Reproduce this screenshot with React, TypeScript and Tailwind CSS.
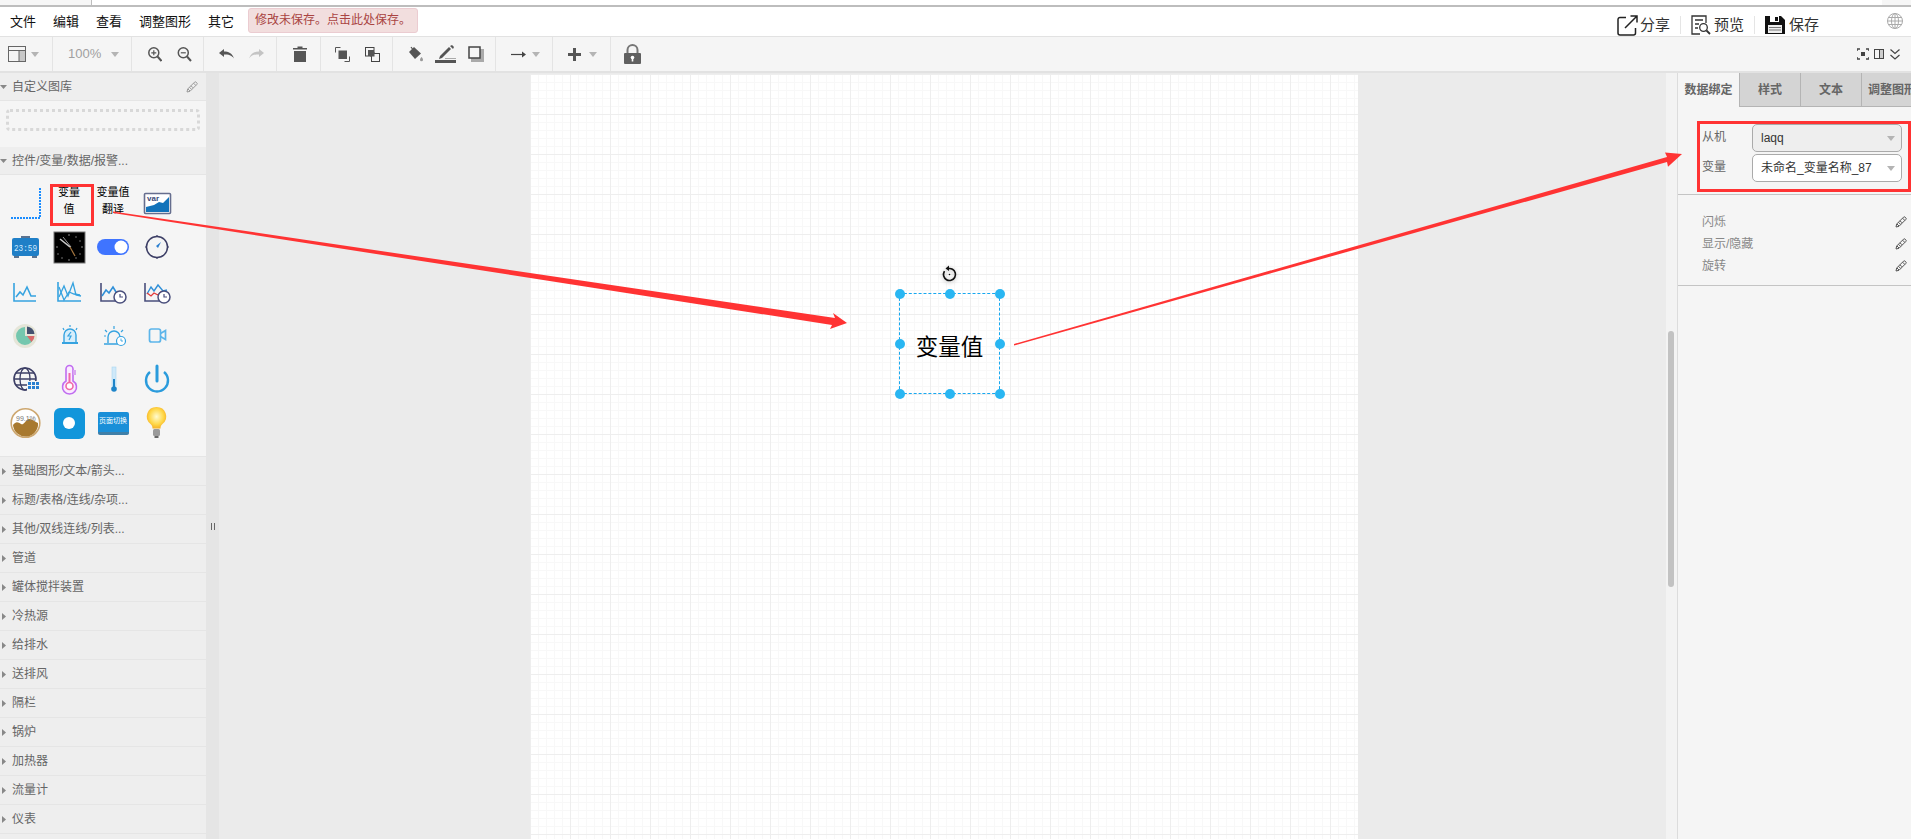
import React from "react";

const Caret = ({ cls = "ml-0" }: { cls?: string }) => (
  <svg className={`${cls} shrink-0`} width="8" height="5" viewBox="0 0 8 5"><path d="M0 0h8L4 5z" fill="#b4b4b4" /></svg>
);

const Pencil = ({ color = "#555" }: { color?: string }) => (
  <svg width="12" height="12" viewBox="0 0 12 12" fill="none" stroke={color} strokeWidth="1">
    <path d="M1 11l.7-3L8.6 1.1a1 1 0 0 1 1.4 0l.9.9a1 1 0 0 1 0 1.4L4 10.3z" />
    <path d="M2 8l2 2M3.5 6.3l2 2M5 4.8l2 2M7.6 2.2l2.2 2.2" />
  </svg>
);

const Sec = ({ w, children }: { w: string; children?: React.ReactNode }) => (
  <div className={`${w} h-full flex items-center shrink-0 border-r border-[#e4e4e4]`}>{children}</div>
);

const Cell = ({ children }: { children: React.ReactNode }) => (
  <svg className="w-[44px] h-[44px]" viewBox="0 0 44 44" fill="none">{children}</svg>
);

const Clock = ({ cx, cy, r = 6 }: { cx: number; cy: number; r?: number }) => (
  <g>
    <circle cx={cx} cy={cy} r={r} fill="#fff" stroke="#4a4f7c" strokeWidth="1.5" />
    <path d={`M${cx} ${cy - 3}V${cy}h3`} stroke="#4a4f7c" strokeWidth="1.2" />
  </g>
);

const icons: React.ReactNode[] = [
  <Cell key="a"><path d="M37 7v30H7" stroke="#1a8cff" strokeWidth="2" strokeDasharray="2 1" /></Cell>,
  <div key="b" className="w-[44px] h-[44px] flex flex-col items-center text-[11px] leading-[17px] pt-[3px] text-black"><span>变量</span><span>值</span></div>,
  <div key="c" className="w-[44px] h-[44px] flex flex-col items-center text-[11px] leading-[17px] pt-[3px] text-black whitespace-nowrap"><span>变量值</span><span>翻译</span></div>,
  <Cell key="d">
    <rect x="9.5" y="12.5" width="26" height="20" rx="1" fill="#fff" stroke="#666e8e" strokeWidth="1.6" />
    <path d="M11 31V26l8-2 5-3 4 1 6-6v15z" fill="#1273ba" />
    <text x="12" y="20" fontSize="8" fontWeight="700" fill="#3b4a78" fontFamily="Liberation Sans">var</text>
  </Cell>,
  <Cell key="e">
    <rect x="18" y="11" width="9" height="3" fill="#5b7390" />
    <rect x="9" y="13" width="27" height="18" rx="2" fill="#1f7fc7" />
    <rect x="11" y="31" width="5" height="2" fill="#5b7390" /><rect x="29" y="31" width="5" height="2" fill="#5b7390" />
    <text x="11" y="25.500" fontSize="9" textLength="23" lengthAdjust="spacingAndGlyphs" fill="#cfeaff" fontFamily="Liberation Mono">23:59</text>
  </Cell>,
  <Cell key="f">
    <rect x="7" y="7" width="31" height="31" fill="#000" stroke="#777" strokeWidth="1" />
    <path d="M13 14l10 8" stroke="#ccc" strokeWidth="1.6" /><path d="M23 22l5 9" stroke="#a5763f" strokeWidth="1.2" /><path d="M16 12l8 10" stroke="#ddd" strokeWidth=".7" />
    <g fill="#999">
      <circle cx="22" cy="10" r=".8" /><circle cx="22" cy="35" r=".8" /><circle cx="10" cy="22" r=".8" /><circle cx="35" cy="22" r=".8" />
      <circle cx="29" cy="12" r=".7" /><circle cx="33" cy="16" r=".7" /><circle cx="33" cy="29" r=".7" /><circle cx="29" cy="33" r=".7" /><circle cx="15" cy="33" r=".7" /><circle cx="11" cy="29" r=".7" />
    </g>
  </Cell>,
  <Cell key="g"><rect x="6" y="14" width="32" height="16" rx="8" fill="#3f74ff" /><circle cx="30" cy="22" r="6.5" fill="#fff" /></Cell>,
  <Cell key="h">
    <circle cx="22" cy="22" r="10.5" stroke="#3d3f66" strokeWidth="1.5" />
    <path d="M22 10v2M22 32v2M10 22h2M32 22h2" stroke="#3d3f66" strokeWidth="1.2" />
    <path d="M26 17l-5 4 2 2z" fill="#2a7fd0" />
  </Cell>,
  <Cell key="i"><path d="M11 14v18h22" stroke="#36a3e0" strokeWidth="1.6" /><path d="M13 28l4-5 3 3 4-8 4 9h5" stroke="#36a3e0" strokeWidth="1.6" /></Cell>,
  <Cell key="j"><path d="M11 13v19h23" stroke="#36a3e0" strokeWidth="1.6" /><path d="M12 28l5-11 4 10 5-13 3 12 5 1" stroke="#36a3e0" strokeWidth="1.3" /><path d="M12 18l5 13 5-8 5 2 6 1" stroke="#36a3e0" strokeWidth="1.3" /></Cell>,
  <Cell key="k"><path d="M10 14v18h15" stroke="#4a4f7c" strokeWidth="1.6" /><path d="M11 27l4-6 3 3 4-6 3 5 4 1" stroke="#2f8fd8" strokeWidth="1.6" /><Clock cx={29} cy={28} /></Cell>,
  <Cell key="l"><path d="M10 14v18h15" stroke="#4a4f7c" strokeWidth="1.6" /><path d="M12 25l4-7 3 4 4-6 5 6 4-1" stroke="#2f8fd8" strokeWidth="1.4" /><path d="M12 24l4 3 3-3 4 2 3-3 5 2" stroke="#e23a3a" strokeWidth="1.3" /><Clock cx={29} cy={28} /></Cell>,
  <Cell key="m">
    <circle cx="22" cy="23" r="12" fill="#e5e5d8" />
    <path d="M22 23V14a9 9 0 1 0 9 9z" fill="#74c7ae" />
    <path d="M24 21v-7.5a8 8 0 0 1 7.5 7.5z" fill="#44516f" />
    <path d="M24 23h7.5a8 8 0 0 1-3 6z" fill="#d9696a" />
  </Cell>,
  <Cell key="n">
    <path d="M17 29v-7a6 6 0 0 1 12 0v7" stroke="#36a3e0" strokeWidth="1.4" fill="#d7eefb" />
    <path d="M24 19l-3 4h3l-2 4" stroke="#36a3e0" strokeWidth="1.2" />
    <path d="M15 30h16" stroke="#36a3e0" strokeWidth="2" /><path d="M23 12v2M16 15l1 2M30 15l-1 2" stroke="#36a3e0" strokeWidth="1.2" />
  </Cell>,
  <Cell key="o">
    <path d="M17 30v-6a6 6 0 0 1 12 0v6M13 31h16" stroke="#36a3e0" strokeWidth="1.4" />
    <path d="M23 13v3M14 17l2 2M13 23h2M32 17l-2 2" stroke="#36a3e0" strokeWidth="1.2" />
    <circle cx="30" cy="28" r="4.5" fill="#fff" stroke="#36a3e0" strokeWidth="1.2" /><path d="M30 25.5V28h2" stroke="#36a3e0" strokeWidth=".9" />
  </Cell>,
  <Cell key="p"><rect x="14.5" y="16" width="11" height="13" rx="2" stroke="#5cb5ea" strokeWidth="1.7" /><path d="M25.500 20.500l5-3v9l-5-3" stroke="#5cb5ea" strokeWidth="1.7" /></Cell>,
  <Cell key="q">
    <circle cx="22" cy="22" r="11" stroke="#3d3f66" strokeWidth="1.6" />
    <ellipse cx="22" cy="22" rx="5" ry="11" stroke="#3d3f66" strokeWidth="1.3" />
    <path d="M11 22h22M13 16h18M13 28h18" stroke="#3d3f66" strokeWidth="1.3" />
    <rect x="24" y="24" width="11" height="11" fill="#f5f5f5" />
    <g fill="#2a7fd0"><rect x="25" y="25" width="3" height="3" /><rect x="29" y="25" width="3" height="3" /><rect x="33" y="25" width="3" height="3" /><rect x="25" y="29" width="3" height="3" /><rect x="29" y="29" width="3" height="3" /><rect x="33" y="29" width="3" height="3" /></g>
  </Cell>,
  <Cell key="r">
    <path d="M19 12a3.500 3.500 0 0 1 7 0v12a7 7 0 1 1-7 0z" stroke="#c06df0" strokeWidth="1.6" fill="#fbeaff" />
    <path d="M22.500 16v11" stroke="#f06aa5" strokeWidth="2" /><circle cx="22.500" cy="29" r="3.500" fill="#fff" stroke="#f06aa5" strokeWidth="1.600" />
    <path d="M26 13h3v5h-3" fill="#d9a6f0" />
  </Cell>,
  <Cell key="s"><rect x="21" y="10" width="4" height="19" fill="#cfe9f9" stroke="#a8d6f2" strokeWidth=".6" /><path d="M23 22v8" stroke="#1f85c9" strokeWidth="2" /><circle cx="23" cy="32" r="2.800" fill="#1f85c9" /></Cell>,
  <Cell key="t"><path d="M15 15a11 11 0 1 0 14 0" stroke="#2a9bdc" strokeWidth="2.400" /><path d="M22 9v15" stroke="#2a9bdc" strokeWidth="3" strokeLinecap="round" /></Cell>,
  <Cell key="u">
    <circle cx="22.500" cy="22" r="14.300" fill="#fff" stroke="#cda76f" strokeWidth="1.600" />
    <path d="M10 24c3-4 5-3 8-1s5-6 9-5 5 3 8 4a12.500 12.500 0 0 1-25 2z" fill="#a8792f" />
    <text x="13" y="20" fontSize="7" fill="#777" fontFamily="Liberation Sans">99.1%</text>
  </Cell>,
  <div key="v" className="w-[44px] h-[44px] flex items-center justify-center"><div className="w-[31px] h-[31px] rounded-[6px] bg-[#1296db] flex items-center justify-center"><div className="w-[12px] h-[12px] rounded-full bg-white" /></div></div>,
  <div key="w" className="w-[44px] h-[44px] flex items-center justify-center"><div className="w-[31px] h-[23px] rounded-[2px] bg-[#1a8fd8] border-b-[3px] border-[#3f7fa8] flex items-center justify-center text-[7px] text-white whitespace-nowrap">页面切换</div></div>,
  <Cell key="x">
    <defs><radialGradient id="bulb" cx="50%" cy="45%" r="60%"><stop offset="0%" stopColor="#fffbd0" /><stop offset="60%" stopColor="#ffd84a" /><stop offset="100%" stopColor="#f4a81c" /></radialGradient></defs>
    <path d="M21.500 6a9.500 9.500 0 0 1 6 17c-1.500 1.200-2 2.500-2 4.500h-8c0-2-.5-3.300-2-4.500a9.500 9.500 0 0 1 6-17z" fill="url(#bulb)" />
    <rect x="18" y="28" width="7" height="7" rx="1.500" fill="#9a9a9a" /><rect x="19.500" y="35" width="4" height="2" fill="#666" />
  </Cell>,
];

const cats = ["基础图形/文本/箭头...", "标题/表格/连线/杂项...", "其他/双线连线/列表...", "管道", "罐体搅拌装置", "冷热源", "给排水", "送排风", "隔栏", "锅炉", "加热器", "流量计", "仪表"];

const Head = ({ label, open = false, children }: { label: string; open?: boolean; children?: React.ReactNode }) => (
  <div className={`${open ? "h-[28px]" : "h-[29px]"} shrink-0 flex items-center bg-[#eeeeee] border-b border-[#e5e5e5] text-[12px] text-[#666]`}>
    {open ? (
      <svg className="ml-[0px] mr-[5px]" width="7" height="4" viewBox="0 0 7 4"><path d="M0 0h7L3.500 4z" fill="#888" /></svg>
    ) : (
      <svg className="ml-[2px] mr-[6px]" width="4" height="7" viewBox="0 0 4 7"><path d="M0 0v7l4-3.500z" fill="#888" /></svg>
    )}
    <span className="whitespace-nowrap">{label}</span>
    {children}
  </div>
);

const handles = [
  "left-[-5px] top-[-5px]", "left-[45px] top-[-5px]", "left-[95px] top-[-5px]",
  "left-[-5px] top-[45px]", "left-[95px] top-[45px]",
  "left-[-5px] top-[95px]", "left-[45px] top-[95px]", "left-[95px] top-[95px]",
];

export default function App() {
  return (
    <div className="relative w-[1911px] h-[839px] overflow-hidden bg-white flex flex-col font-['Liberation_Sans','Noto_Sans_CJK_SC',sans-serif]">
      {/* browser strip */}
      <div className="h-[7px] shrink-0 flex bg-[#f6f6f6] border-b-2 border-[#bdbdbd]">
        <div className="ml-[91px] w-[1791px] bg-white border-l border-[#bdbdbd]" />
      </div>

      {/* menu bar */}
      <div className="h-[30px] shrink-0 flex items-center bg-white border-b border-[#e2e2e2] text-[13px] text-[#111]">
        <span className="ml-[10px]">文件</span>
        <span className="ml-[17px]">编辑</span>
        <span className="ml-[17px]">查看</span>
        <span className="ml-[17px]">调整图形</span>
        <span className="ml-[17px]">其它</span>
        <div className="ml-[14px] w-[170px] h-[25px] -mt-[3px] flex items-center pl-[6px] rounded-[3px] bg-[#f2dede] border border-[#ebccd1] text-[12px] text-[#a94442] whitespace-nowrap">修改未保存。点击此处保存。</div>
        <div className="ml-auto flex items-center h-full pt-[7px] text-[15px] text-[#333]">
          <svg width="21" height="21" viewBox="0 0 21 21" fill="none" stroke="#222" strokeWidth="1.500"><path d="M9 2.500H3a2 2 0 0 0-2 2V18a2 2 0 0 0 2 2h13.500a2 2 0 0 0 2-2v-5" /><path d="M8 13L19.500 1.500M13.500 1h6.500v6.500" /></svg>
          <span className="ml-[2px]">分享</span>
          <div className="ml-[10px] w-px h-[18px] bg-[#e5e5e5]" />
          <svg className="ml-[10px]" width="20" height="20" viewBox="0 0 20 20" fill="none" stroke="#333" strokeWidth="1.300"><path d="M15 8V1H1v18h8" /><path d="M4 5h8M4 9h4M4 13h3" /><circle cx="12.500" cy="12.500" r="3.800" /><path d="M15.500 15.500l3.500 3.500" strokeWidth="1.800" /></svg>
          <span className="ml-[3px]">预览</span>
          <div className="ml-[10px] w-px h-[18px] bg-[#e5e5e5]" />
          <svg className="ml-[10px]" width="20" height="20" viewBox="0 0 20 20"><path d="M0 1h16l4 4v14H0z" fill="#111" /><rect x="5" y="1" width="9" height="6" fill="#fff" /><rect x="10" y="2" width="3" height="4" fill="#111" /><rect x="3" y="10" width="14" height="8" fill="#eee" /><path d="M4 12.500h12M4 15h12" stroke="#777" strokeWidth="1" /></svg>
          <span className="ml-[4px]">保存</span>
          <svg className="ml-[68px] mr-[8px] -mt-[8px]" width="16" height="16" viewBox="0 0 16 16" fill="none" stroke="#aaa" strokeWidth="1"><circle cx="8" cy="8" r="7.500" /><ellipse cx="8" cy="8" rx="3.500" ry="7.500" /><path d="M.5 8h15M1.500 4.500h13M1.500 11.500h13M8 .5v15" /></svg>
        </div>
      </div>

      {/* toolbar */}
      <div className="h-[36px] shrink-0 flex items-center bg-[#f5f5f5] border-b-2 border-[#e2e2e2]">
        <Sec w="w-[53px]">
          <svg className="ml-[8px]" width="18" height="16" viewBox="0 0 18 16" fill="none"><rect x="11" y="4" width="6.500" height="11.500" fill="#c8c8c8" /><rect x=".5" y=".5" width="17" height="15" stroke="#666" /><path d="M.5 4.500h17M11 4.500v11" stroke="#666" /></svg>
          <Caret cls="ml-[5px]" />
        </Sec>
        <Sec w="w-[79px]">
          <span className="ml-[15px] w-[32px] text-[13px] text-[#a0a0a0] whitespace-nowrap">100%</span>
          <Caret cls="ml-[11px]" />
        </Sec>
        <Sec w="w-[72px]">
          <svg className="ml-[16px]" width="14" height="15" viewBox="0 0 14 15" fill="none" stroke="#555" strokeWidth="1.500"><circle cx="5.800" cy="5.800" r="5" /><path d="M9.500 9.500L13.500 14" strokeWidth="2" /><path d="M3.300 5.800h5M5.800 3.300v5" strokeWidth="1.200" /></svg>
          <svg className="ml-[15px]" width="15" height="15" viewBox="0 0 14 15" fill="none" stroke="#555" strokeWidth="1.500"><circle cx="5.800" cy="5.800" r="5" /><path d="M9.500 9.500L13.500 14" strokeWidth="2" /><path d="M3.300 5.800h5" strokeWidth="1.200" /></svg>
        </Sec>
        <Sec w="w-[73px]">
          <svg className="ml-[15px]" width="15" height="10" viewBox="0 0 15 10"><path d="M0 4l5-4v2.500c4.500 0 8 1.500 10 7-2.500-3.500-5.500-4-10-4V8z" fill="#555" /></svg>
          <svg className="ml-[15px]" width="15" height="10" viewBox="0 0 15 10"><path d="M15 4l-5-4v2.500c-4.500 0-8 1.500-10 7 2.500-3.500 5.500-4 10-4V8z" fill="#c4c4c4" /></svg>
        </Sec>
        <Sec w="w-[44px]">
          <svg className="ml-[16px]" width="14" height="16" viewBox="0 0 14 16"><path d="M0 2h4.500V.5h5V2H14v1.500H0zM1 5h12v11H1z" fill="#555" /></svg>
        </Sec>
        <Sec w="w-[72px]">
          <svg className="ml-[14px]" width="15" height="15" viewBox="0 0 15 15" fill="none"><rect x="3.500" y="3.500" width="8.500" height="8.500" fill="#555" /><path d="M.5 5.500V.5h5M14.500 9.500v5h-5" stroke="#555" /></svg>
          <svg className="ml-[15px]" width="15" height="15" viewBox="0 0 15 15" fill="none"><rect x=".5" y=".5" width="8.500" height="8.500" stroke="#444" /><rect x="3" y="3" width="6" height="6" fill="#555" /><rect x="6.500" y="6.500" width="8" height="8" fill="#f5f5f5" stroke="#444" /><rect x="5" y="5" width="4.500" height="4.500" fill="#555" /></svg>
        </Sec>
        <Sec w="w-[103px]">
          <svg className="ml-[15px]" width="16" height="16" viewBox="0 0 16 16"><path d="M1 6l5-5 7 6.500L7 13z" fill="#555" /><path d="M3 1l3 4" stroke="#555" strokeWidth="1.200" /><path d="M13.500 11c1 1.300 1.500 2 1.500 2.800a1.500 1.500 0 0 1-3 0c0-.8.500-1.500 1.500-2.800z" fill="#999" /></svg>
          <svg className="ml-[11px]" width="21" height="18" viewBox="0 0 21 18"><path d="M5 11l-1 3 3-1L16 4l-2-2z" fill="#555" /><path d="M15 1l2-1 2 2-1 2z" fill="#555" /><rect x="0" y="15" width="21" height="3" fill="#555" /><rect x="10" y="13" width="11" height="1" fill="#aaa" /></svg>
          <svg className="ml-[12px]" width="16" height="16" viewBox="0 0 16 16" fill="none"><rect x="3" y="3" width="13" height="13" fill="#aaa" /><rect x="1" y="1" width="11" height="11" fill="#f5f5f5" stroke="#444" strokeWidth="1.500" /></svg>
        </Sec>
        <Sec w="w-[57px]">
          <svg className="ml-[15px]" width="15" height="7" viewBox="0 0 15 7"><path d="M0 3.500h12" stroke="#444" strokeWidth="1.200" /><path d="M11 .5l4 3-4 3z" fill="#444" /></svg>
          <Caret cls="ml-[6px]" />
        </Sec>
        <Sec w="w-[58px]">
          <svg className="ml-[15px]" width="13" height="13" viewBox="0 0 13 13"><path d="M5 0h3v5h5v3H8v5H5V8H0V5h5z" fill="#555" /></svg>
          <Caret cls="ml-[8px]" />
        </Sec>
        <svg className="ml-[13px]" width="17" height="20" viewBox="0 0 17 20"><path d="M3.500 9V6a5 5 0 0 1 10 0v3" fill="none" stroke="#777" strokeWidth="2" /><rect x="0" y="9" width="17" height="11" rx="1" fill="#606060" /><circle cx="8.500" cy="13.500" r="1.800" fill="#fff" /><rect x="7.700" y="14" width="1.600" height="3.500" fill="#fff" /></svg>
        <div className="ml-auto flex items-center mr-[11px]">
          <svg width="12" height="12" viewBox="0 0 12 12" fill="none" stroke="#444" strokeWidth="1.500"><path d="M0 3V1h3M9 1h3v2M12 9v2H9M3 11H0V9" /><rect x="4" y="4" width="4" height="4" fill="#444" stroke="none" /></svg>
          <svg className="ml-[5px]" width="10" height="10" viewBox="0 0 10 10" fill="none"><rect x="5.500" y=".5" width="4" height="9" fill="#ccc" /><rect x=".5" y=".5" width="9" height="9" stroke="#444" /><path d="M5.500 .5v9" stroke="#444" /></svg>
          <svg className="ml-[6px]" width="10" height="11" viewBox="0 0 10 11" fill="none" stroke="#444" strokeWidth="1.200"><path d="M.5 .5L5 4.500 9.500 .5M.5 6L5 10l4.500-4" /></svg>
        </div>
      </div>

      {/* body */}
      <div className="flex-1 min-h-0 flex">
        {/* sidebar */}
        <div className="w-[206px] shrink-0 flex flex-col bg-[#f5f5f5] overflow-hidden">
          <Head label="自定义图库" open>
            <span className="ml-auto mr-[8px]"><Pencil color="#999" /></span>
          </Head>
          <div className="h-[46px] shrink-0 pt-[8px] px-[6px]">
            <div className="h-[22px] rounded-[4px] border-[3px] border-dotted border-[#d8d8d8]" />
          </div>
          <Head label="控件/变量/数据/报警..." open />
          <div className="h-[282px] shrink-0 pt-[6px] pl-[3px] grid grid-cols-[repeat(4,44px)] auto-rows-[44px] border-b border-[#e5e5e5]">
            {icons}
          </div>
          {cats.map((c) => (<Head key={c} label={c} />))}
          <div className="flex-1 bg-[#eeeeee]" />
        </div>

        {/* splitter */}
        <div className="w-[13px] shrink-0 bg-[#e5e5e5] flex justify-center pt-[450px]">
          <div className="w-[4px] h-[7px] border-x border-[#666]" />
        </div>

        {/* canvas */}
        <div className="w-[1447px] shrink-0 bg-[#ebebeb] pl-[311px] overflow-hidden">
          <div className="relative w-[828px] h-[900px] mt-[1px] bg-white bg-[linear-gradient(to_right,#eeeeee_1px,transparent_1px),linear-gradient(to_bottom,#eeeeee_1px,transparent_1px),linear-gradient(to_right,#f8f8f8_1px,transparent_1px),linear-gradient(to_bottom,#f8f8f8_1px,transparent_1px)] bg-[size:40px_40px,40px_40px,8px_8px,8px_8px]">
            <div className="absolute left-[369px] top-[219px] w-[101px] h-[101px] border border-dashed border-[#17a8f0] flex items-center justify-center pt-[8px] text-[22.5px] text-black">
              变量值
              {handles.map((h) => (<div key={h} className={`absolute ${h} w-[10px] h-[10px] rounded-full bg-[#29b6f2]`} />))}
              <svg className="absolute left-[41px] top-[-29px] drop-shadow-[0_1px_2px_rgba(0,0,0,0.3)]" width="17" height="17" viewBox="0 0 17 17" fill="none">
                <circle cx="8.500" cy="9.500" r="6" stroke="#111" strokeWidth="1.600" strokeDasharray="28 5" transform="rotate(-60 8.500 9.500)" />
                <path d="M8 .5l-3.500 3 3.500 2.500z" fill="#111" />
                <circle cx="8.500" cy="9.500" r=".8" fill="#111" />
              </svg>
            </div>
          </div>
        </div>

        {/* scrollbar */}
        <div className="w-[12px] shrink-0 bg-[#f3f3f3] border-r border-[#dcdcdc] pt-[258px] pl-[2px]">
          <div className="w-[6px] h-[256px] rounded-[3px] bg-[#c2c2c2]" />
        </div>

        {/* right panel */}
        <div className="flex-1 min-w-0 bg-[#f5f5f5] overflow-hidden">
          <div className="flex h-[34px] text-[12px] font-bold text-[#666] whitespace-nowrap">
            <div className="w-[61px] flex items-center justify-center">数据绑定</div>
            <div className="w-[61px] flex items-center justify-center bg-[#d4d4d4] border-l border-b border-[#b4b4b4]">样式</div>
            <div className="w-[61px] flex items-center justify-center bg-[#d4d4d4] border-l border-b border-[#b4b4b4]">文本</div>
            <div className="w-[50px] flex items-center overflow-hidden pl-[6px] bg-[#d4d4d4] border-l border-b border-[#b4b4b4]">调整图形</div>
          </div>
          <div className="h-[88px] border-b border-[#c4c4c4] pt-[17px] pl-[24px] text-[12px] text-[#666] flex flex-col gap-[2px]">
            <div className="flex items-center h-[28px]">
              <span className="w-[50px] -mt-[2px]">从机</span>
              <div className="w-[150px] h-[28px] flex items-center justify-between pl-[8px] pr-[6px] bg-[#eeeeee] border border-[#aaaaaa] rounded-[5px] text-[#333]">laqq<Caret /></div>
            </div>
            <div className="flex items-center h-[28px]">
              <span className="w-[50px] -mt-[2px]">变量</span>
              <div className="w-[150px] h-[28px] flex items-center justify-between pl-[8px] pr-[6px] bg-white border border-[#aaaaaa] rounded-[5px] text-[#333] whitespace-nowrap">未命名_变量名称_87<Caret /></div>
            </div>
          </div>
          <div className="h-[91px] border-b border-[#c4c4c4] pt-[16px] pl-[24px] pr-[4px] text-[12px] text-[#888]">
            {["闪烁", "显示/隐藏", "旋转"].map((t) => (
              <div key={t} className="h-[22px] flex items-center justify-between"><span>{t}</span><Pencil /></div>
            ))}
          </div>
        </div>
      </div>

      {/* annotation overlay */}
      <div className="absolute left-[50px] top-[184px] w-[44px] h-[42px] border-[3px] border-[#f33]" />
      <div className="absolute left-[1697px] top-[121px] w-[214px] h-[71px] border-[3px] border-[#f33]" />
      <svg className="absolute inset-0 pointer-events-none" width="1911" height="839" viewBox="0 0 1911 839">
        <polygon points="113,211.500 835,318 833,313 847,323 830,329 832,325 113,213" fill="#f33" />
        <polygon points="1014,344 1667,157 1665,152.500 1682,154 1668,166.700 1667,162 1014,345.500" fill="#f33" />
      </svg>
    </div>
  );
}
